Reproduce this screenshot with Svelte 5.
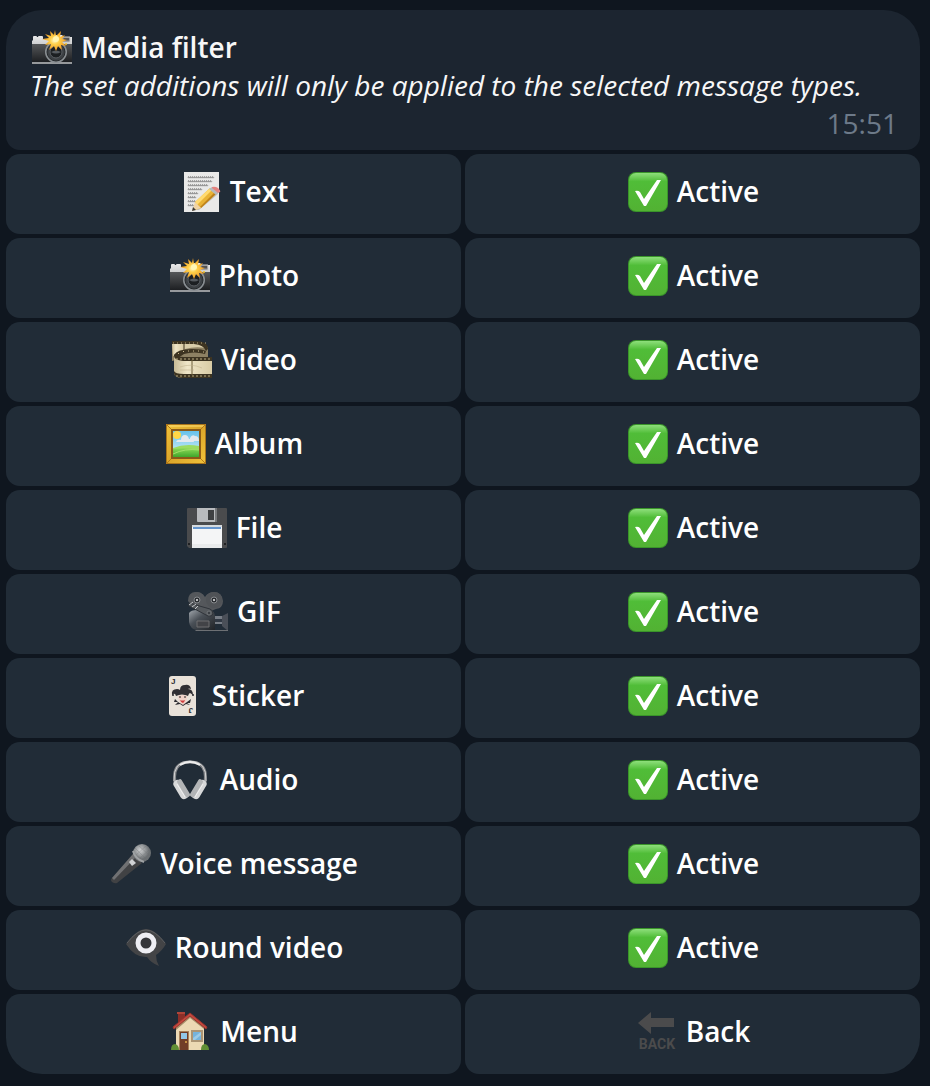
<script lang="ts">
  interface MediaType {
    icon: string
    label: string
    active: boolean
  }

  let types = $state<MediaType[]>([
    { icon: 'memo', label: 'Text', active: true },
    { icon: 'camera', label: 'Photo', active: true },
    { icon: 'film', label: 'Video', active: true },
    { icon: 'picture', label: 'Album', active: true },
    { icon: 'floppy', label: 'File', active: true },
    { icon: 'movie', label: 'GIF', active: true },
    { icon: 'joker', label: 'Sticker', active: true },
    { icon: 'headphones', label: 'Audio', active: true },
    { icon: 'microphone', label: 'Voice message', active: true },
    { icon: 'eye', label: 'Round video', active: true },
  ])

  const rays = '23,2 24,8 29,3 28,9 33,7 30,11 35,12 30,14 34,18 29,17 30,22 26,18 24,23 22,18 17,22 19,16 13,17 17,13 10,11 17,10 13,6 19,8 18,3 22,7'
  const holes = [3, 7, 11, 15, 19, 23, 27, 31, 35]

  // handwriting on the memo sheet: y and number of strokes per line
  const lines = [[6, 13], [10, 12], [14, 10], [18, 7], [22, 5], [26, 4], [30, 4], [34, 3]]
</script>

{#snippet icon(name: string)}
  <svg class="icon" class:narrow={name === 'joker'} viewBox={name === 'joker' ? '0 0 36 40' : '0 0 40 40'} aria-hidden="true">
    <use href="#{name}" />
    {#if name === 'joker'}
      <text x="6" y="8" class="pip">J</text>
      <text x="6" y="8" class="pip" transform="rotate(180 17 20)">J</text>
    {:else if name === 'back'}
      <text x="20" y="37" text-anchor="middle" class="back-text">BACK</text>
    {/if}
  </svg>
{/snippet}

<svg class="sprite" aria-hidden="true">
  <defs>
    <linearGradient id="silver" x1="0" y1="0" x2="0" y2="1">
      <stop offset="0" stop-color="#ececec" /><stop offset="1" stop-color="#909497" />
    </linearGradient>
    <linearGradient id="dark" x1="0" y1="0" x2="0" y2="1">
      <stop offset="0" stop-color="#555759" /><stop offset="1" stop-color="#1d1f22" />
    </linearGradient>
    <linearGradient id="steel" x1="0" y1="0" x2="1" y2="1">
      <stop offset="0" stop-color="#a0a6ac" /><stop offset=".4" stop-color="#4a5057" /><stop offset="1" stop-color="#202327" />
    </linearGradient>
    <linearGradient id="green" x1="0" y1="0" x2="0" y2="1">
      <stop offset="0" stop-color="#8edf7b" /><stop offset=".22" stop-color="#50bd38" /><stop offset="1" stop-color="#52b233" />
    </linearGradient>
    <linearGradient id="gold" x1="0" y1="0" x2="1" y2="1">
      <stop offset="0" stop-color="#efc13a" /><stop offset=".5" stop-color="#dba62a" /><stop offset="1" stop-color="#efc13a" />
    </linearGradient>
    <linearGradient id="cream" x1="0" y1="0" x2="1" y2="0">
      <stop offset="0" stop-color="#c8bb96" /><stop offset=".35" stop-color="#efe6c8" /><stop offset="1" stop-color="#d9cca5" />
    </linearGradient>
    <linearGradient id="sky" x1="0" y1="0" x2="0" y2="1">
      <stop offset="0" stop-color="#67c2ec" /><stop offset="1" stop-color="#d9f2f8" />
    </linearGradient>
    <linearGradient id="grass" x1="0" y1="0" x2="0" y2="1">
      <stop offset="0" stop-color="#8cda56" /><stop offset="1" stop-color="#3fa62c" />
    </linearGradient>
    <radialGradient id="flash">
      <stop offset="0" stop-color="#fffbd0" /><stop offset=".35" stop-color="#ffd24c" /><stop offset="1" stop-color="#f0971d" />
    </radialGradient>
    <radialGradient id="mesh" cx=".4" cy=".35">
      <stop offset="0" stop-color="#d0d2d3" /><stop offset="1" stop-color="#6b6f72" />
    </radialGradient>
  </defs>

  <symbol id="camera" viewBox="0 0 40 40">
    <path d="M1 12V9q0-1 1-1h2q1 0 1 1h1q0-1 1-1h3q1 0 1 1v2h7l2-4h10l2 2h8q1 0 1 2v24H0V13z" fill="url(#silver)" />
    <path d="M0 16h40v18H0z" fill="url(#dark)" />
    <path d="M0 34h40v2H0z" fill="#96999c" />
    <path d="M30 9h8v5h-8z" fill="#777" stroke="#c9c9c9" />
    <path d="M32 11h5" stroke="#333" />
    <circle cx="24" cy="24" r="11" fill="#898e92" />
    <circle cx="24" cy="24" r="9" fill="#3c4044" stroke="#26292c" />
    <circle cx="24" cy="24" r="6" fill="#1c1f22" stroke="#5b5f64" />
    <path d="M19 24q5-3 10 0-5 3-10 0z" fill="#565b60" />
    <circle cx="34" cy="16" r="1" fill="#f6c22b" />
    <polygon points={rays} fill="url(#flash)" />
    <circle cx="24" cy="11" r="3" fill="#fff6b4" />
  </symbol>

  <symbol id="memo" viewBox="0 0 40 40">
    <path d="M3 0h35v40H3z" fill="#e9e9e8" />
    {#each lines as [y, strokes]}
      {#each Array(strokes) as _, i}
        <path d="M{7 + i * 2} {y}l.6-1.6.5 1.8.9-1" fill="none" stroke="#6b6b6b" stroke-width=".6" />
      {/each}
    {/each}
    <path d="M14 38l23-19v3L18 38z" opacity=".18" />
    <path d="M14 30l15-14 7 5-16 15-6 2z" fill="#e9b335" />
    <path d="M14 30l15-14 2 2-15 15z" fill="#ffda70" />
    <path d="M19 35l15-15 2 1-16 15z" fill="#bd811c" />
    <path d="M14 30l-3 9 9-3-3-3z" fill="#f0d4a6" />
    <path d="M12 35l-1 4 4-1z" fill="#3c3a36" />
    <path d="M28 17l3-2 7 5-3 3z" fill="#b6babd" />
    <path d="M31 15q3-1 6 1 3 3 2 4l-2 1-6-5z" fill="#e5837f" />
  </symbol>

  <symbol id="film" viewBox="0 0 40 40">
    <path d="M0 2h23q11 0 13 6v11H8L0 21z" fill="#8d8163" />
    <path d="M0 4h11v9L1 16z" fill="url(#cream)" />
    <path d="M13 4h13q7 1 8 4-11-2-21 1z" fill="#d8cda9" />
    <path d="M0 1h23q13 0 13 8l-2 2q-2-6-12-7H0z" fill="#3d3421" />
    <path d="M2 15q3-6 18-6 11 0 14 2l-1 3q-11-3-21 0l-6 4z" fill="#3d3421" />
    <path d="M2 14q0 5 10 5h28v19H11q-9 0-9-6z" fill="url(#cream)" />
    <path d="M2 14q1 3 10 3h28v4H11q-9-1-9-5zM2 31q1 3 10 3h28v4H11q-9 0-9-5z" fill="#3d3421" />
    <path d="M20 20v15" stroke="#6b5c38" />
    {#each holes as x}
      <path d="M{x + 1} 19h2M{x + 1} 36h2" stroke="#b9ab82" />
      <path d="M{x - 2} 3h1" stroke="#b9aa80" />
    {/each}
    <path d="M6 14l1-1M11 12l1-1M16 11h1M21 11h1M26 11h1M31 12h1" stroke="#cdbd91" />
    <path d="M8 27q11-4 22 1M8 30h14" fill="none" stroke="#bcae88" opacity=".5" />
  </symbol>

  <symbol id="picture" viewBox="0 0 40 40">
    <path d="M0 0h40v40H0z" fill="#a9741a" />
    <path d="M1 1h38v38H1z" fill="url(#gold)" />
    <path d="M2 2h36" stroke="#ffe075" />
    <path d="M0 0l7 7M40 0l-7 7M0 40l7-7M40 40l-7-7" stroke="#b57a1b" />
    <path d="M5 5h30v30H5z" fill="#8a5a18" />
    <path d="M7 7h26v26H7z" fill="url(#sky)" />
    <circle cx="11" cy="11" r="4" fill="#ffd747" />
    <path d="M10 18q1-3 5-2 0-5 4-5 3 0 4 4 4-2 5 3zM24 14q2-4 5-2 4 0 4 5h-9z" fill="#e4e9ee" />
    <path d="M7 24q12-5 26-2v11H7z" fill="#9cdc62" />
    <path d="M7 25q13-2 26 1v7H7z" fill="url(#grass)" />
    <path d="M7 30q12-6 26-4" fill="none" stroke="#a4df6b" />
  </symbol>

  <symbol id="floppy" viewBox="0 0 40 40">
    <path d="M0 1q0-1 1-1h38q1 0 1 1v38q0 1-1 1H2l-2-2z" fill="#4a4b4d" />
    <path d="M10 0h20v14H11q-1 0-1-1z" fill="#b9bbbe" />
    <path d="M21 2h6v10h-6z" fill="#3e4042" />
    <path d="M28 0h2v14h-2z" fill="#77797b" />
    <path d="M5 17h30v23H5z" fill="#f4f5f6" />
    <path d="M5 17h30v2H5z" fill="#d5dade" />
    <path d="M6 19h28v2H6z" fill="#6695cd" />
    <path d="M5 36h30v4H5z" fill="#e9ebec" />
    <path d="M1 35h2v2H1zM37 35h2v2h-2z" fill="#202123" />
  </symbol>

  <symbol id="movie" viewBox="0 0 40 40">
    <path d="M0 9q0-9 8-9 5 0 9 5 3-5 9-5 8 0 9 9 0 7-7 8l-5 2L3 13z" fill="#54575b" />
    <circle cx="9" cy="8" r="8" fill="#55585c" />
    <circle cx="26" cy="8" r="8" fill="#505357" />
    <circle cx="9" cy="8" r="3" fill="#2b2e32" stroke="#85888b" />
    <circle cx="26" cy="8" r="3" fill="#2b2e32" stroke="#85888b" />
    <circle cx="9" cy="8" r="1" fill="#f0f0f0" /><circle cx="26" cy="8" r="1" fill="#f0f0f0" />
    <path d="M1 21q2-3 8-3h13q5 1 5 7v13H9q-7-1-8-8z" fill="url(#steel)" />
    <path d="M1 11l21 6q3 1 3 5-1 3-5 2L1 14z" fill="#55595d" stroke="#30343a" />
    <path d="M1 13l4-3M4 15l4-3M7 17l3-3" stroke="#c4c6c9" />
    <circle cx="21" cy="21" r="2" fill="#3b3f44" stroke="#73777b" />
    <path d="M9 29h12v6H9z" fill="#424347" stroke="#6e6f70" />
    <path d="M27 24h8v8h-8z" fill="#777d86" />
    <path d="M27 27h8v3h-8z" fill="#303843" />
    <path d="M34 24l6-3v18l-6-5z" fill="#4a4f58" />
    <path d="M7 38h33v1H8z" fill="#6d7074" />
  </symbol>

  <symbol id="joker" viewBox="0 0 36 40">
    <rect x="4" width="27" height="40" rx="3" fill="#e9e2d9" />
    <path d="M7 19q-1-6 5-6 2 0 3 1 0-5 5-5 5-1 6 4-2-1-3 0 5 0 5 6l-3-2q-1 0-2 3-6-3-12 0-1-4-4-1z" fill="#302f33" />
    <circle cx="8" cy="19" r="1" fill="#262529" /><circle cx="28" cy="19" r="1" fill="#262529" />
    <path d="M13 20q5-2 9 0 0 7-4 9-4-2-5-9z" fill="#f1d1c7" />
    <path d="M14 21h2M19 21h2" stroke="#222" />
    <path d="M15 24q2 1 5 0-1 3-2 3-2 0-3-3z" fill="#cf3d3e" />
    <path d="M10 23l3 3 5 3 4-3 4-3-1 4-3 0 3 2-4-1-3 2-3-2-5 1 3-3-4 0z" fill="#2c2b30" />
  </symbol>

  <symbol id="headphones" viewBox="0 0 40 40">
    <path d="M4 22Q1 2 19 2t15 20" fill="none" stroke="#85878a" stroke-width="3" />
    <path d="M3 21Q2 1 19 1t16 20" fill="none" stroke="#d1d2d3" />
    <path d="M9 5q10-6 20 0" fill="none" stroke="#ededed" stroke-width="2" />
    <rect x="6" y="19" width="8" height="21" rx="4" transform="rotate(-31 10 30)" fill="#d7d8d9" />
    <rect x="10" y="18" width="5" height="20" rx="2" transform="rotate(-31 13 28)" fill="#b2b4b6" />
    <rect x="24" y="19" width="8" height="21" rx="4" transform="rotate(31 28 30)" fill="#d7d8d9" />
    <rect x="23" y="18" width="5" height="20" rx="2" transform="rotate(31 25 28)" fill="#b2b4b6" />
    <path d="M6 24l8 13M32 24l-8 13" stroke="#f0f0f0" />
  </symbol>

  <symbol id="microphone" viewBox="0 0 40 40">
    <path d="M22 10l9 9L6 39q-2 1-5-1-2-2 0-4z" fill="#414244" />
    <path d="M22 10l3 3L3 36l-2-2z" fill="#707173" />
    <path d="M18 18l3-3 4 4-4 3z" fill="#d0d2d4" />
    <circle cx="31" cy="9" r="9" fill="url(#mesh)" />
    <path d="M24 4l12 12M27 1l12 11M23 9l9 8M24 12l12-11M28 15L39 5" stroke="#686b6d" opacity=".3" />
    <path d="M22 7q2 8 11 11" fill="none" stroke="#9fa2a4" stroke-width="2" />
  </symbol>

  <symbol id="eye" viewBox="0 0 40 40">
    <path d="M0 16Q11 1 20 1t20 15q-4 7-10 11 0 6 3 11-8-3-12-9Q9 30 0 16z" fill="#434446" />
    <path d="M1 15Q11 2 20 2t19 13" fill="none" stroke="#5c5e61" />
    <circle cx="20" cy="15" r="8" fill="#35363a" stroke="#eeeef3" stroke-width="5" />
  </symbol>

  <symbol id="house" viewBox="0 0 40 40">
    <path d="M7 1h7v11H7z" fill="#8d2f28" /><path d="M6 0h8v2H6z" fill="#b04438" />
    <path d="M5 15L19 3l14 12v23H5z" fill="#ecd9b4" />
    <path d="M5 15L19 3l14 12v2L19 6 5 18z" fill="#a58c68" />
    <path d="M2 15L19 1l17 14-1 2L19 4 3 17z" fill="#c4493f" stroke="#9b352d" />
    <path d="M8 19h10v19H8z" fill="#a78159" /><path d="M9 20h8v18H9z" fill="#713d27" />
    <path d="M10 21h6v6h-6z" fill="#92c7e7" /><circle cx="15" cy="30" r="1" fill="#e0ad4d" />
    <path d="M20 18h12v12H20z" fill="#ac9575" /><path d="M22 20h8v8h-8z" fill="#75b3dc" />
    <path d="M22 26l8-6v3l-6 5h-2z" fill="#9ccbe8" />
    <path d="M0 38q0-6 4-6 4 1 4 6zM30 38q0-6 4-6 4 1 4 6z" fill="#618f35" />
  </symbol>

  <symbol id="check" viewBox="0 0 40 40">
    <rect width="40" height="40" rx="8" fill="#3a952a" />
    <rect x="1" y="1" width="38" height="38" rx="7" fill="url(#green)" />
    <path d="M7 19q3-1 5 1l4 7L29 8h4L18 34h-2z" fill="#fff" />
  </symbol>

  <symbol id="back" viewBox="0 0 40 40">
    <path d="M1 11L14 0v6h23v9H14v7z" fill="#4b4b4c" />
  </symbol>
</svg>

<main>
  <header class="message">
    <h1>{@render icon('camera')}Media filter</h1>
    <p>The set additions will only be applied to the selected message types.</p>
    <time datetime="15:51">15:51</time>
  </header>

  <div class="keyboard">
    {#each types as type}
      <button type="button">{@render icon(type.icon)}{type.label}</button>
      <button
        type="button"
        aria-pressed={type.active}
        aria-label="{type.label}: {type.active ? 'Active' : 'Inactive'}"
        onclick={() => (type.active = !type.active)}
      >
        {#if type.active}{@render icon('check')}Active{:else}Inactive{/if}
      </button>
    {/each}
    <button type="button">{@render icon('house')}Menu</button>
    <button type="button">{@render icon('back')}Back</button>
  </div>
</main>

<style>
  :global(body) {
    background: #0f161f;
  }
  .sprite {
    position: absolute;
    width: 0;
    height: 0;
  }
  main {
    display: flex;
    flex-direction: column;
    gap: 4px;
    padding: 10px 10px 12px 6px;
    font: 28px/38px 'Open Sans', 'Noto Sans', sans-serif;
    color: #fff;
  }
  .message {
    display: flex;
    flex-direction: column;
    padding: 18px 22px 8px 24px;
    border-radius: 36px 36px 14px 14px;
    background: #1c2530;
    color: #f7f7f7;
  }
  h1,
  p {
    margin: 0;
    font-size: 28px;
  }
  h1 {
    display: flex;
    align-items: center;
    height: 38px;
    font-weight: 600;
  }
  p {
    font-style: italic;
  }
  time {
    align-self: flex-end;
    color: #6d7a89;
  }
  .keyboard {
    display: grid;
    grid-template-columns: 1fr 1fr;
    gap: 4px;
  }
  button {
    display: flex;
    align-items: center;
    justify-content: center;
    min-height: 80px;
    padding: 0 8px 6px;
    border: none;
    border-radius: 14px;
    background: #212c37;
    color: inherit;
    font: inherit;
    font-weight: 600;
    cursor: pointer;
  }
  button:hover {
    background: #273440;
  }
  button:nth-last-child(2) {
    border-bottom-left-radius: 36px;
  }
  button:last-child {
    border-bottom-right-radius: 36px;
  }
  .icon {
    flex: none;
    width: 40px;
    height: 40px;
    margin: 2px 9px 0 2px;
  }
  .icon.narrow {
    width: 36px;
    margin-right: 11px;
  }
  .pip {
    font: 700 8px 'Liberation Sans', sans-serif;
    fill: #2c2b2f;
  }
  .back-text {
    font: 700 14px Roboto, 'Open Sans', sans-serif;
    fill: #4b4b4c;
  }
</style>
